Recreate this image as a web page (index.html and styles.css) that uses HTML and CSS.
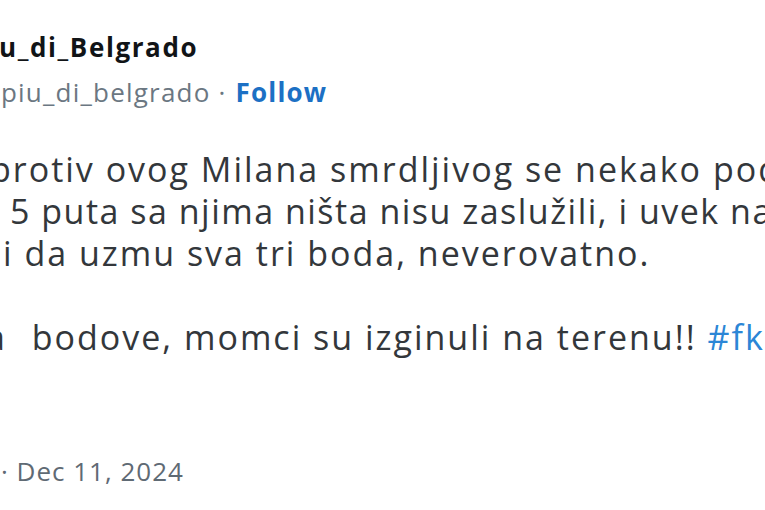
FILE: index.html
```html
<!DOCTYPE html>
<html lang="sr">
<head>
<meta charset="utf-8">
<link rel="stylesheet" href="styles.css">
</head>
<body>
<div class="tweet">
  <div class="author">
    <div class="name">u_di_Belgrado</div>
    <div class="handle"><span class="user">piu_di_belgrado</span><span class="dot">·</span><span class="follow">Follow</span></div>
  </div>
  <div class="text">
    <div class="line l1">protiv ovog Milana smrdljivog se nekako pod</div>
    <div class="line l2">5 puta sa njima ništa nisu zaslužili, i uvek na</div>
    <div class="line l3">i da uzmu sva tri boda, neverovatno.</div>
    <div class="line blank"></div>
    <div class="line l4"><span class="cut">a</span> bodove, momci su izginuli na terenu!! <span class="tag">#fkcz</span></div>
  </div>
  <div class="date">· Dec 11, 2024</div>
</div>
</body>
</html>
```
FILE: styles.css
```css
html, body {
  margin: 0;
  padding: 0;
  background: #ffffff;
  width: 765px;
  height: 510px;
  overflow: hidden;
}
.tweet {
  font-family: "Open Sans", "Noto Sans", sans-serif;
  color: #2b2f33;
  padding-top: 30px;
}
.author {
  display: flex;
  flex-direction: column;
  gap: 11px;
}
.name {
  font-weight: 700;
  font-size: 26px;
  line-height: 34px;
  letter-spacing: 1.6px;
  color: #111417;
  white-space: nowrap;
  margin-left: -1px;
}
.handle {
  display: flex;
  align-items: baseline;
  font-size: 26px;
  line-height: 34px;
  letter-spacing: 1.2px;
  color: #6b7782;
  white-space: nowrap;
  padding-left: 1px;
}
.dot {
  margin: 0 9px 0 8px;
}
.follow {
  font-weight: 700;
  color: #1c70c4;
}
.text {
  margin-top: 39px;
  font-size: 34px;
  line-height: 42px;
  letter-spacing: 2px;
  color: #33373b;
}
.line {
  white-space: nowrap;
  height: 42px;
}
.l1 { margin-left: -10px; }
.l2 { margin-left: 10px; letter-spacing: 1.5px; }
.l3 { margin-left: 3px; }
.l4 { margin-left: -14px; }
.cut { margin-right: 14px; }
.tag {
  color: #2b86d6;
}
.date {
  margin-top: 96px;
  font-size: 26px;
  line-height: 34px;
  letter-spacing: 1px;
  color: #5f6a74;
  padding-left: 1px;
  white-space: nowrap;
}
```
